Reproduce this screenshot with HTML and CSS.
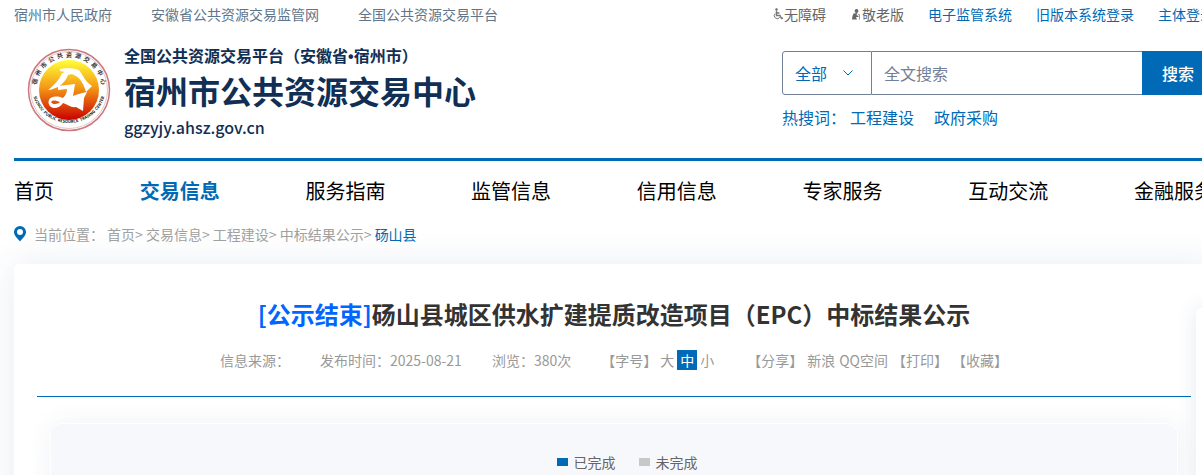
FILE: index.html
```html
<!DOCTYPE html>
<html lang="zh-CN">
<head>
    <meta charset="UTF-8">
    <meta name="viewport" content="width=device-width, initial-scale=1.0">
    <title>宿州市公共资源交易中心</title>
    <link rel="stylesheet" href="styles.css">
</head>
<body>
    <div class="container">
        <div class="topbar">
            <div class="topbar-left">
                <a href="#">宿州市人民政府</a>
                <a href="#">安徽省公共资源交易监管网</a>
                <a href="#">全国公共资源交易平台</a>
            </div>
            <div class="topbar-right">
                <a href="#" class="tool">
                    <svg width="12" height="12" viewBox="0 0 12 12" fill="none" stroke="#777"><circle cx="4.500" cy="1.500" r="1.200" fill="#666" stroke="none"/><path stroke-width="1.400" d="M4.500 3v4.500h3.500l1.500 3 1.500-.5M4.500 5h3"/><path d="M3.200 5.500a3 3 0 1 0 4.600 3.800"/></svg>
                    无障碍
                </a>
                <a href="#" class="tool">
                    <svg width="12" height="12" viewBox="0 0 12 12" fill="#666"><circle cx="6.500" cy="3" r="1.900"/><path d="M3.500 5.500 7.500 5 6.500 7l2 1v1H6l1 2.500H2L2.500 8z"/><path d="M8 6.500h1.500V11.500" fill="none" stroke="#999"/></svg>
                    敬老版
                </a>
                <a href="#">电子监管系统</a>
                <a href="#">旧版本系统登录</a>
                <a href="#">主体登录</a>
            </div>
        </div>

        <div class="header">
            <div class="brand">
                <svg class="emblem" width="84" height="84" viewBox="0 0 84 84">
                    <defs>
                        <linearGradient id="fire" x1="0" y1="0" x2="0" y2="1">
                            <stop offset="0" stop-color="#ffff38"/>
                            <stop offset=".45" stop-color="#f49b16"/>
                            <stop offset="1" stop-color="#c90000"/>
                        </linearGradient>
                        <path id="arc-top" d="M10 50a33 33 0 1 1 64 0"/>
                        <path id="arc-bottom" d="M5 38a37 37 0 1 0 74 0"/>
                    </defs>
                    <circle cx="42" cy="42" r="40.500" fill="#fff" stroke="#c9787f" stroke-width="1.500"/>
                    <circle cx="42" cy="42" r="38.500" fill="none" stroke="#e5c3c5" stroke-width="1"/>
                    <circle cx="42" cy="42" r="30" fill="url(#fire)"/>
                    <text class="ring-cn"><textPath href="#arc-top" startOffset="50%">宿&#160; 州&#160; 市&#160; 公&#160; 共&#160; 资&#160; 源&#160; 交&#160; 易&#160; 中&#160; 心</textPath></text>
                    <text class="ring-en"><textPath href="#arc-bottom" startOffset="50%">SUZHOU&#160; PUBLIC&#160; RESOURCE&#160; TRADING&#160; CENTER</textPath></text>
                    <g fill="#fff">
                        <path d="M33 21C37 20 45 20 49 21C53 22 54 25 56 28C58 32 61 35 65 38L59 44C57 37 54 31 49 28C46 26 43 26 41 27C38 35 31 41 21 42C26 38 32 32 34 27C35 25 36 25 38 24L33 23Z"/>
                        <path fill-rule="evenodd" d="M31 38L48 36L46 48C50 46 55 45 60 44L57 50L56 63L49 59C44 60 40 56 36 55C33 60 27 61 24 59C20 56 21 50 26 49C30 48 34 49 36 50C39 47 40 44 40 41C37 41 34 42 31 42ZM25 53C23 54 25 56 28 56C30 56 32 55 33 54C30 53 27 52 25 53Z"/>
                    </g>
                </svg>
                <div class="brand-text">
                    <p class="platform">全国公共资源交易平台（安徽省<span>•</span>宿州市）</p>
                    <h1>宿州市公共资源交易中心</h1>
                    <p class="domain">ggzyjy.ahsz.gov.cn</p>
                </div>
            </div>
            <div class="search">
                <form class="search-form">
                    <div class="search-type">
                        <select aria-label="搜索类型">
                            <option>全部</option>
                        </select>
                        <svg width="10" height="6" viewBox="0 0 10 6" fill="none" stroke="#006ab6"><path d="M.5.500 5 5 9.500.500"/></svg>
                    </div>
                    <input type="text" placeholder="全文搜索" aria-label="全文搜索">
                    <button type="button">搜索</button>
                </form>
                <div class="hot">
                    <span>热搜词：</span>
                    <a href="#">工程建设</a>
                    <a href="#">政府采购</a>
                </div>
            </div>
        </div>

        <nav class="nav">
            <a href="#">首页</a>
            <a href="#" class="active">交易信息</a>
            <a href="#">服务指南</a>
            <a href="#">监管信息</a>
            <a href="#">信用信息</a>
            <a href="#">专家服务</a>
            <a href="#">互动交流</a>
            <a href="#">金融服务</a>
        </nav>

        <div class="location">
            <svg width="12" height="16" viewBox="0 0 12 16"><path fill="#006ab6" fill-rule="evenodd" d="M6 0a6 6 0 0 1 6 6c0 3.500-3.500 6.500-6 9.500C3.500 12.500 0 9.500 0 6a6 6 0 0 1 6-6zm0 3a3 3 0 1 0 0 6 3 3 0 0 0 0-6z"/></svg>
            <span class="location-label">当前位置：</span>
            <div class="crumbs">
                <a href="#">首页</a>&gt;
                <a href="#">交易信息</a>&gt;
                <a href="#">工程建设</a>&gt;
                <a href="#">中标结果公示</a>&gt;
                <a href="#" class="current">砀山县</a>
            </div>
        </div>

        <div class="article">
            <h2><span>[公示结束]</span>砀山县城区供水扩建提质改造项目（EPC）中标结果公示</h2>
            <div class="meta">
                <span>信息来源：</span>
                <span>发布时间：2025-08-21</span>
                <span>浏览：380次</span>
                <div class="font-size">
                    <span>【字号】</span>
                    <button type="button">大</button>
                    <button type="button" class="on">中</button>
                    <button type="button">小</button>
                </div>
                <div class="share">
                    <span>【分享】</span>
                    <a href="#">新浪</a>
                    <a href="#">QQ空间</a>
                    <a href="#">【打印】</a>
                    <a href="#">【收藏】</a>
                </div>
            </div>
            <div class="chart">
                <div class="legend">
                    <span class="done">已完成</span>
                    <span class="todo">未完成</span>
                </div>
            </div>
        </div>
    </div>
    <div class="side-panel"></div>
</body>
</html>
```
FILE: styles.css
```css
* {
    box-sizing: border-box;
    margin: 0;
    padding: 0;
}
body {
    position: relative;
    font-family: "Noto Sans CJK SC", sans-serif;
    font-size: 14px;
    line-height: 20px;
    color: #333;
    background: #fff;
    overflow: hidden;
}
a {
    color: inherit;
    text-decoration: none;
}
button,
input,
select {
    font: inherit;
    border: none;
    background: none;
}
.container {
    min-width: 1200px;
    margin: 0 -12px 0 14px;
}
.topbar {
    display: flex;
    justify-content: space-between;
    padding-top: 4px;
    white-space: nowrap;
}
.topbar-left {
    display: flex;
    gap: 39px;
    color: #60758a;
}
.topbar-right {
    display: flex;
    gap: 24px;
    color: #006ab6;
}
.tool {
    display: flex;
    align-items: center;
    color: #666;
}
.header {
    display: flex;
    justify-content: space-between;
    padding: 19px 0 15px;
}
.brand {
    display: flex;
    padding-left: 13px;
    gap: 13px;
    color: #112f54;
}
.emblem {
    margin-top: 5px;
}
.ring-cn,
.ring-en {
    font-weight: bold;
    text-anchor: middle;
}
.ring-cn {
    font-size: 6px;
    fill: #333;
}
.ring-en {
    font-size: 4px;
    fill: #111;
}
.platform {
    font-size: 16px;
    font-weight: bold;
    line-height: 24px;
}
.platform span {
    font-family: "Liberation Sans", sans-serif;
}
.brand h1 {
    font-size: 32px;
    font-weight: bold;
    line-height: 42px;
}
.domain {
    font-size: 16px;
    font-weight: 500;
    line-height: 32px;
}
.search {
    width: 432px;
    padding-top: 8px;
    font-size: 16px;
    color: #006ab6;
}
.search-form {
    display: flex;
    height: 44px;
}
.search-type {
    display: grid;
    width: 90px;
    align-items: center;
    border: 1px solid #718096;
    border-radius: 3px 0 0 3px;
}
.search-type select {
    grid-area: 1 / 1;
    height: 42px;
    padding-left: 12px;
    color: #006ab6;
    appearance: none;
}
.search-type svg {
    grid-area: 1 / 1;
    justify-self: end;
    margin-right: 18px;
    pointer-events: none;
}
.search-form input {
    flex: 1;
    min-width: 0;
    padding-left: 12px;
    border: 1px solid #718096;
    border-width: 1px 0;
}
.search-form input::placeholder {
    color: #718096;
}
.search-form button {
    width: 72px;
    font-weight: 500;
    color: #fff;
    background: #006ab6;
}
.hot {
    display: flex;
    gap: 20px;
    padding-top: 10px;
    line-height: 24px;
}
.hot span {
    margin-right: -16px;
}
.nav {
    display: flex;
    justify-content: space-between;
    padding: 15px 0;
    border-top: 3px solid #006ab6;
    font-size: 20px;
    line-height: 30px;
    color: #000;
    white-space: nowrap;
}
.nav .active {
    font-weight: bold;
    color: #006ab6;
}
.location {
    display: flex;
    align-items: center;
    padding: 3px 0 20px;
    color: #a0a0a0;
}
.location-label {
    margin: 0 3px 0 8px;
}
.crumbs .current {
    color: #006ab6;
}
.article {
    padding: 32px 23px 0;
    border-radius: 5px;
    background: #fff;
    box-shadow: 0 0 36px rgba(40, 70, 120, 0.1);
}
.article h2 {
    font-size: 24px;
    font-weight: bold;
    line-height: 36px;
    text-align: center;
}
.article h2 span {
    color: #0066ff;
}
.meta {
    display: flex;
    justify-content: center;
    gap: 30px;
    padding: 18px 0 26px;
    border-bottom: 1px solid #006ab6;
    color: #999;
}
.font-size,
.share {
    display: flex;
    gap: 4px;
}
.font-size {
    gap: 3px;
}
.share {
    padding-left: 3px;
}
.font-size button {
    color: #999;
    cursor: pointer;
}
.font-size .on {
    width: 20px;
    color: #fff;
    background: #006ab6;
}
.chart {
    height: 400px;
    margin: 26px 13px 0;
    padding: 28px 0 0 26px;
    border: 1px solid #fff;
    border-radius: 12px;
    background: #f7f8fb;
    box-shadow: 0 0 24px rgba(40, 70, 120, 0.07);
}
.legend {
    display: flex;
    justify-content: center;
    gap: 23px;
    color: #666;
}
.legend span {
    display: flex;
    align-items: center;
    gap: 6px;
}
.legend span::before {
    content: "";
    width: 11px;
    height: 8px;
    background: #006ab6;
}
.legend .todo::before {
    background: #c8c8c8;
}
/* right column, partly over the article */
.side-panel {
    position: absolute;
    top: 308px;
    right: -294px;
    width: 300px;
    height: 500px;
    border-radius: 5px;
    background: #fff;
    box-shadow: 0 0 20px rgba(40, 70, 120, 0.12);
}
```
